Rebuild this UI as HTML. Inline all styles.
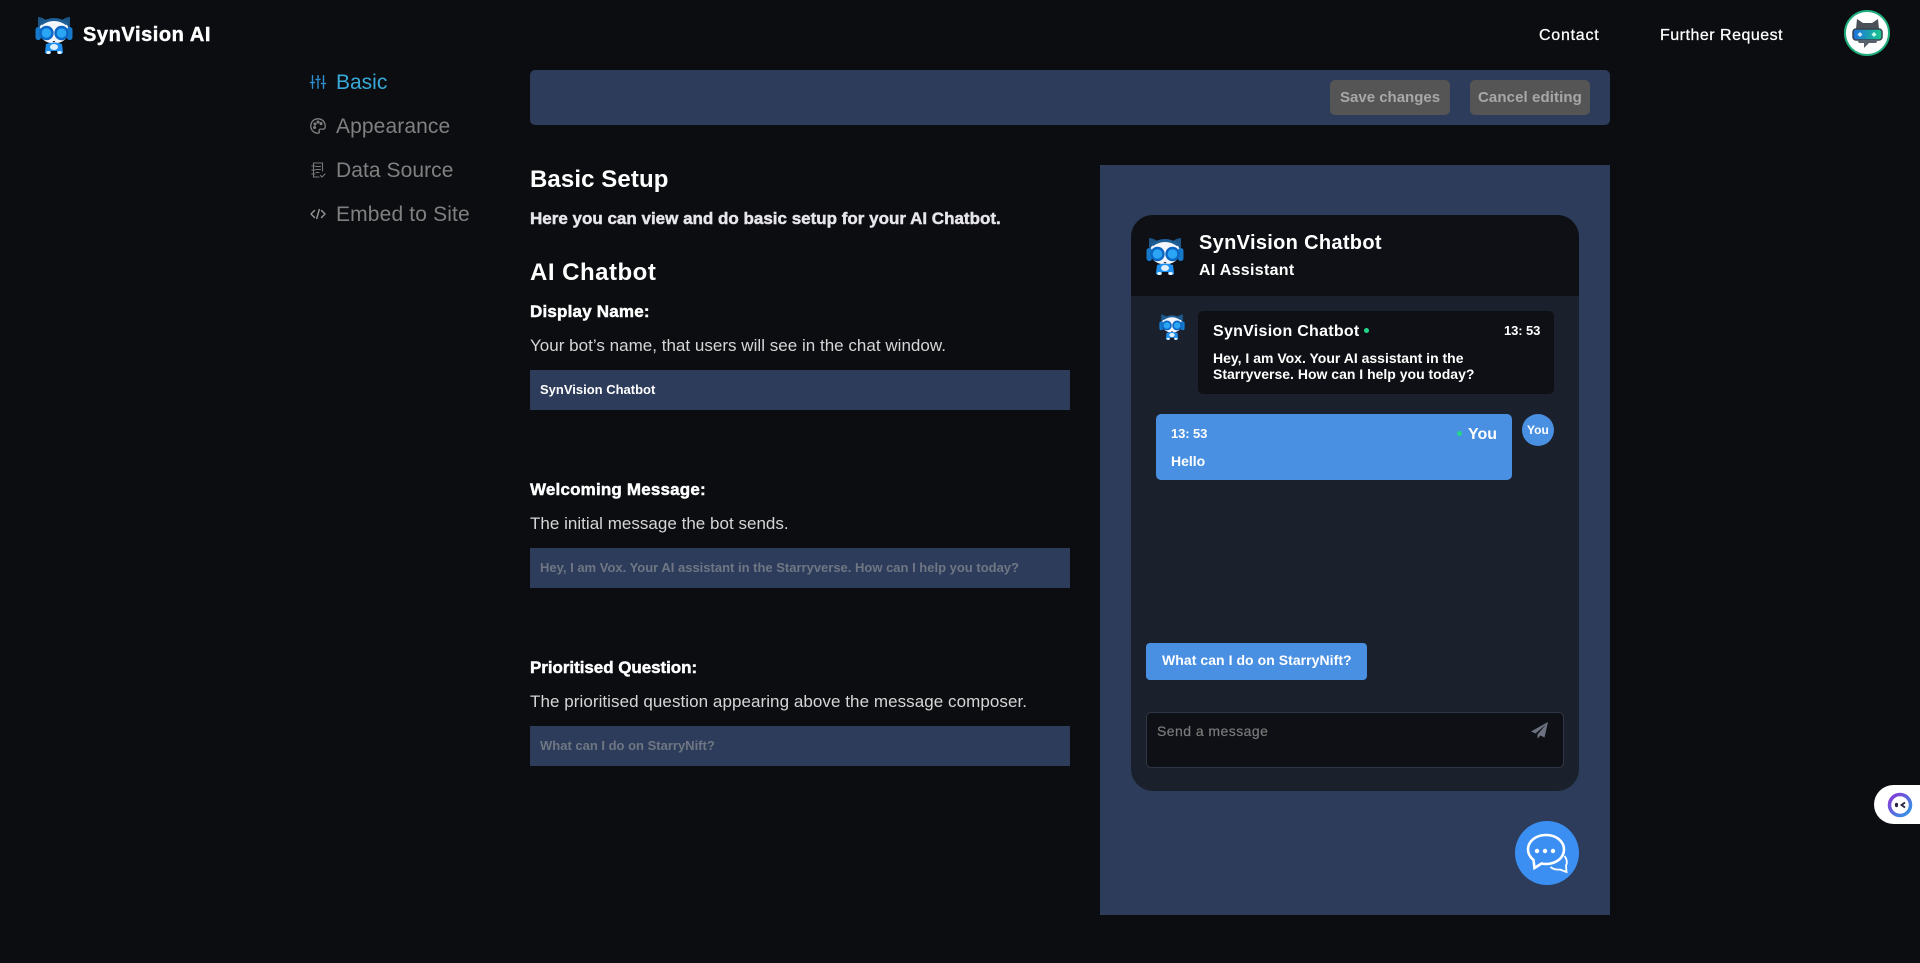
<!DOCTYPE html>
<html lang="en">
<head>
<meta charset="utf-8">
<title>SynVision AI</title>
<style>
html,body{margin:0;padding:0;background:#0b0d10;}
body{position:relative;width:1920px;height:963px;overflow:hidden;font-family:"Liberation Sans",Arial,sans-serif;color:#fff;}
.b{position:absolute;box-sizing:border-box;}
.t{position:absolute;white-space:nowrap;line-height:20px;height:20px;}
.w{font-weight:700;}
.hv{font-weight:700;-webkit-text-stroke:.45px currentColor;}
.nav{font-size:21px;color:#808080;}
.lab{font-size:17px;}
.desc{font-size:17px;color:#d6d6d6;letter-spacing:.02px;}
.inp{background:#2d3c5a;left:530px;width:540px;height:40px;}
.ph{font-size:13px;font-weight:700;color:#6f7684;}
svg{position:absolute;display:block;overflow:visible;}
</style>
</head>
<body>
<svg width="0" height="0" style="position:absolute">
  <defs>
    <symbol id="cat" viewBox="0 0 38 39">
      <path d="M3 2 Q7 2 11 5 L27 5 Q31 2 35 2 L35 14 L3 14Z" fill="#1c5688"/>
      <ellipse cx="19" cy="16" rx="15" ry="12.500" fill="#f4f7fb"/>
      <path d="M6 9 Q19 0 32 9" stroke="#1f5f98" stroke-width="3" fill="none"/>
      <rect x="0.500" y="12" width="5.500" height="13" rx="2.700" fill="#1678c9"/>
      <rect x="32" y="12" width="5.500" height="13" rx="2.700" fill="#1678c9"/>
      <circle cx="11.500" cy="18" r="7.200" fill="#0c66c4"/>
      <circle cx="26.500" cy="18" r="7.200" fill="#0c66c4"/>
      <circle cx="11.500" cy="18" r="4.800" fill="#2ba6f5"/>
      <circle cx="26.500" cy="18" r="4.800" fill="#2ba6f5"/>
      <path d="M17.500 26 L20.500 26 L19 27.500Z" fill="#223"/>
      <path d="M11 29 Q19 26 27 29 L28 37 Q28 39 25 39 L23 39 L22 36 L16 36 L15 39 L13 39 Q10 39 10 37Z" fill="#1e8fee"/>
      <ellipse cx="19" cy="32" rx="4" ry="3" fill="#dff1ff"/>
      <ellipse cx="13.500" cy="37.500" rx="2.300" ry="1.500" fill="#e8f6ff"/>
      <ellipse cx="24.500" cy="37.500" rx="2.300" ry="1.500" fill="#e8f6ff"/>
    </symbol>
    <linearGradient id="visor" x1="0" x2="1" y1="0" y2="0"><stop offset="0" stop-color="#1f6fe0"/><stop offset="1" stop-color="#19c98a"/></linearGradient>
    <linearGradient id="ring" x1="0" x2="1" y1="0" y2="1"><stop offset="0" stop-color="#8a35d6"/><stop offset="1" stop-color="#2e9be6"/></linearGradient>
  </defs>
</svg>

<!-- Top nav -->
<svg style="left:35px;top:15px" width="38" height="39"><use href="#cat"/></svg>
<div class="t hv" style="left:83px;top:25px;font-size:20px;letter-spacing:.57px">SynVision AI</div>
<div class="t" style="left:1539px;top:26px;font-size:16px;letter-spacing:.75px;-webkit-text-stroke:.25px #fff">Contact</div>
<div class="t" style="left:1660px;top:26px;font-size:16px;letter-spacing:.5px;-webkit-text-stroke:.25px #fff">Further Request</div>
<svg style="left:1844px;top:10px" width="46" height="46" viewBox="0 0 46 46">
  <circle cx="23" cy="23" r="22" fill="#fff" stroke="#1fae7c" stroke-width="2"/>
  <path d="M13 9 L19 13 L28 13 L34 9 L35 19 L12 19Z" fill="#4a5058"/>
  <rect x="9" y="19" width="29" height="11" rx="3" fill="url(#visor)" stroke="#39424c" stroke-width="1.500"/>
  <path d="M13 30 L34 30 L32 33 L25 33 L20 38 L20 33 L15 33Z" fill="#59626c"/>
  <path d="M16 22 L18.500 24.500 L16 27 L13.500 24.500Z" fill="#cfe9ff"/><path d="M30 22 L32.500 24.500 L30 27 L27.500 24.500Z" fill="#c7ffe9"/>
</svg>

<!-- Sidebar -->
<svg style="left:310px;top:75px" width="16" height="14" viewBox="0 0 16 14" fill="none" stroke="#2f8fd0" stroke-width="1.400" stroke-linecap="round">
  <path d="M2.500 0.700V6M2.500 9V13.300M8 0.700V3M8 6V13.300M13.500 0.700V7M13.500 10V13.300M0.500 7.500H4.500M6 4.500H10M11.500 8.500H15.500"/>
</svg>
<div class="t nav" style="left:336px;top:73px;color:#38a9d8">Basic</div>
<svg style="left:310px;top:118px" width="16" height="16" viewBox="0 0 16 16" fill="none" stroke="#808080" stroke-width="1.300">
  <path d="M8 .8C3.900.8.800 3.900.800 8s3.100 7.200 7.200 7.200c1.200 0 1.600-.9 1.200-1.800-.5-1.100.1-2.300 1.400-2.300h2.400c1.500 0 2.200-1 2.200-2.600C15.200 3.400 12 .8 8 .8Z"/>
  <circle cx="5" cy="6" r=".9" fill="#808080"/><circle cx="8" cy="4" r=".9" fill="#808080"/><circle cx="11" cy="5.600" r=".9" fill="#808080"/><circle cx="4.600" cy="9.500" r=".9" fill="#808080"/>
</svg>
<div class="t nav" style="left:336px;top:117px;letter-spacing:.1px">Appearance</div>
<svg style="left:311px;top:162px" width="15" height="16" viewBox="0 0 15 16" fill="none" stroke="#777" stroke-width="1.100" stroke-linecap="round">
  <path d="M2.500 1H11.500V9M2.500 1V15H8M0.800 4H4M0.800 8H4M0.800 12H4M5 4.500H9.500M5 7.500H9.500M5 10.500H8M9.500 13.500L11 15L14 12"/>
</svg>
<div class="t nav" style="left:336px;top:161px;letter-spacing:.07px">Data Source</div>
<svg style="left:310px;top:208px" width="16" height="12" viewBox="0 0 16 12" fill="none" stroke="#999" stroke-width="1.400" stroke-linecap="round" stroke-linejoin="round">
  <path d="M4.500 2.500L1 6L4.500 9.500M11.500 2.500L15 6L11.500 9.500M9.300 1.500L6.700 10.500"/>
</svg>
<div class="t nav" style="left:336px;top:205px;letter-spacing:.15px">Embed to Site</div>

<!-- Toolbar -->
<div class="b" style="left:530px;top:70px;width:1080px;height:55px;background:#2d3c5a;border-radius:5px"></div>
<div class="b" style="left:1330px;top:80px;width:120px;height:35px;background:#555;border-radius:5px"></div>
<div class="t w" style="left:1340px;top:88px;font-size:15px;color:#a8a8a8">Save changes</div>
<div class="b" style="left:1470px;top:80px;width:120px;height:35px;background:#555;border-radius:5px"></div>
<div class="t w" style="left:1478px;top:88px;font-size:15px;color:#a8a8a8;letter-spacing:.1px">Cancel editing</div>

<!-- Form -->
<div class="t w" style="left:530px;top:170px;font-size:24px;letter-spacing:.1px">Basic Setup</div>
<div class="t hv lab" style="left:530px;top:209px;color:#e6e6ea">Here you can view and do basic setup for your AI Chatbot.</div>
<div class="t w" style="left:530px;top:263px;font-size:24px;letter-spacing:.5px">AI Chatbot</div>

<div class="t hv lab" style="left:530px;top:302px;letter-spacing:.2px">Display Name:</div>
<div class="t desc" style="left:530px;top:336px">Your bot’s name, that users will see in the chat window.</div>
<div class="b inp" style="top:370px"></div>
<div class="t ph" style="left:540px;top:380px;color:#fff">SynVision Chatbot</div>

<div class="t hv lab" style="left:530px;top:480px;letter-spacing:.18px">Welcoming Message:</div>
<div class="t desc" style="left:530px;top:514px">The initial message the bot sends.</div>
<div class="b inp" style="top:548px"></div>
<div class="t ph" style="left:540px;top:558px">Hey, I am Vox. Your AI assistant in the Starryverse. How can I help you today?</div>

<div class="t hv lab" style="left:530px;top:658px;letter-spacing:-.05px">Prioritised Question:</div>
<div class="t desc" style="left:530px;top:692px;letter-spacing:.06px">The prioritised question appearing above the message composer.</div>
<div class="b inp" style="top:726px"></div>
<div class="t ph" style="left:540px;top:736px">What can I do on StarryNift?</div>

<!-- Preview -->
<div class="b" style="left:1100px;top:165px;width:510px;height:750px;background:#2d3c5a"></div>
<div class="b" style="left:1131px;top:215px;width:448px;height:576px;background:#1a202c;border-radius:22px;overflow:hidden">
  <div class="b" style="left:0;top:0;width:448px;height:81px;background:#0e1015"></div>
</div>
<svg style="left:1146px;top:236px" width="38" height="39"><use href="#cat"/></svg>
<div class="t w" style="left:1199px;top:233px;font-size:20px;letter-spacing:.32px">SynVision Chatbot</div>
<div class="t w" style="left:1199px;top:261px;font-size:16px;letter-spacing:.3px">AI Assistant</div>

<svg style="left:1159px;top:313px" width="26" height="27"><use href="#cat"/></svg>
<div class="b" style="left:1198px;top:311px;width:356px;height:83px;background:#0e1015;border-radius:5px"></div>
<div class="t w" style="left:1213px;top:322px;font-size:16px;letter-spacing:.27px">SynVision Chatbot</div>
<div class="b" style="left:1364px;top:328px;width:5px;height:5px;border-radius:50%;background:#22d68a"></div>
<div class="t w" style="left:1504px;top:321px;font-size:13px;letter-spacing:-.1px">13: 53</div>
<div class="t w" style="left:1213px;top:348px;font-size:14px">Hey, I am Vox. Your AI assistant in the</div>
<div class="t w" style="left:1213px;top:364px;font-size:14px">Starryverse. How can I help you today?</div>

<div class="b" style="left:1156px;top:414px;width:356px;height:66px;background:#4a90e2;border-radius:5px"></div>
<div class="t w" style="left:1171px;top:424px;font-size:13px;letter-spacing:-.1px">13: 53</div>
<div class="b" style="left:1457px;top:431px;width:5px;height:5px;border-radius:50%;background:#22d68a"></div>
<div class="t w" style="left:1468px;top:425px;font-size:16px">You</div>
<div class="t w" style="left:1171px;top:451px;font-size:14px">Hello</div>
<div class="b" style="left:1522px;top:414px;width:32px;height:32px;border-radius:50%;background:#4a90e2"></div>
<div class="t w" style="left:1527px;top:420px;font-size:12px">You</div>

<div class="b" style="left:1146px;top:643px;width:221px;height:37px;background:#4a90e2;border-radius:4px"></div>
<div class="t w" style="left:1162px;top:650px;font-size:14px;letter-spacing:.05px">What can I do on StarryNift?</div>

<div class="b" style="left:1146px;top:712px;width:418px;height:56px;background:#0e1015;border:1px solid #2f3644;border-radius:5px"></div>
<div class="t" style="left:1157px;top:721px;font-size:14px;color:#7a7a7a;letter-spacing:.45px;-webkit-text-stroke:.2px #7a7a7a">Send a message</div>
<svg style="left:1531px;top:722px" width="17" height="17" viewBox="0 0 17 17"><path d="M17 0L0 9.500L4.500 11.500L15 2.500L6.500 12.500V16.500L9.500 13.500L13.500 15.500Z" fill="#6d7280"/></svg>

<div class="b" style="left:1515px;top:821px;width:64px;height:64px;border-radius:50%;background:#3b8ff3"></div>
<svg style="left:1525px;top:832px" width="44" height="42" viewBox="0 0 44 42" fill="none" stroke="#fff">
  <path d="M39.500 24C42 27 42.500 31 41 33.500L41.500 40L35 37.500C31.500 38 28 37 25.500 35" stroke-width="1.800"/>
  <path d="M21 3C10.500 3 3 9.500 3 17.500C3 22 5.500 25.500 8.500 28L9.500 36L16.500 31.500C18 31.800 19.500 32 21 32C31.500 32 39 25.500 39 17.500C39 9.500 31.500 3 21 3Z" stroke-width="2.600" fill="#3b8ff3"/>
  <circle cx="12" cy="19" r="2.200" fill="#fff" stroke="none"/><circle cx="20" cy="19" r="2.200" fill="#fff" stroke="none"/><circle cx="28" cy="19" r="2.200" fill="#fff" stroke="none"/>
</svg>

<!-- Floating widget -->
<div class="b" style="left:1874px;top:785px;width:46px;height:39px;background:#fff;border-radius:20px 0 0 20px"></div>
<svg style="left:1887px;top:792px" width="26" height="26" viewBox="0 0 26 26">
  <circle cx="13" cy="13" r="10.500" fill="#fff" stroke="url(#ring)" stroke-width="3.500"/>
  <ellipse cx="9.500" cy="13" rx="1.600" ry="2.200" fill="#2b2140"/>
  <path d="M18 10.500L14.500 13L18 15.500" fill="none" stroke="#2b2140" stroke-width="1.800"/>
</svg>
</body>
</html>
